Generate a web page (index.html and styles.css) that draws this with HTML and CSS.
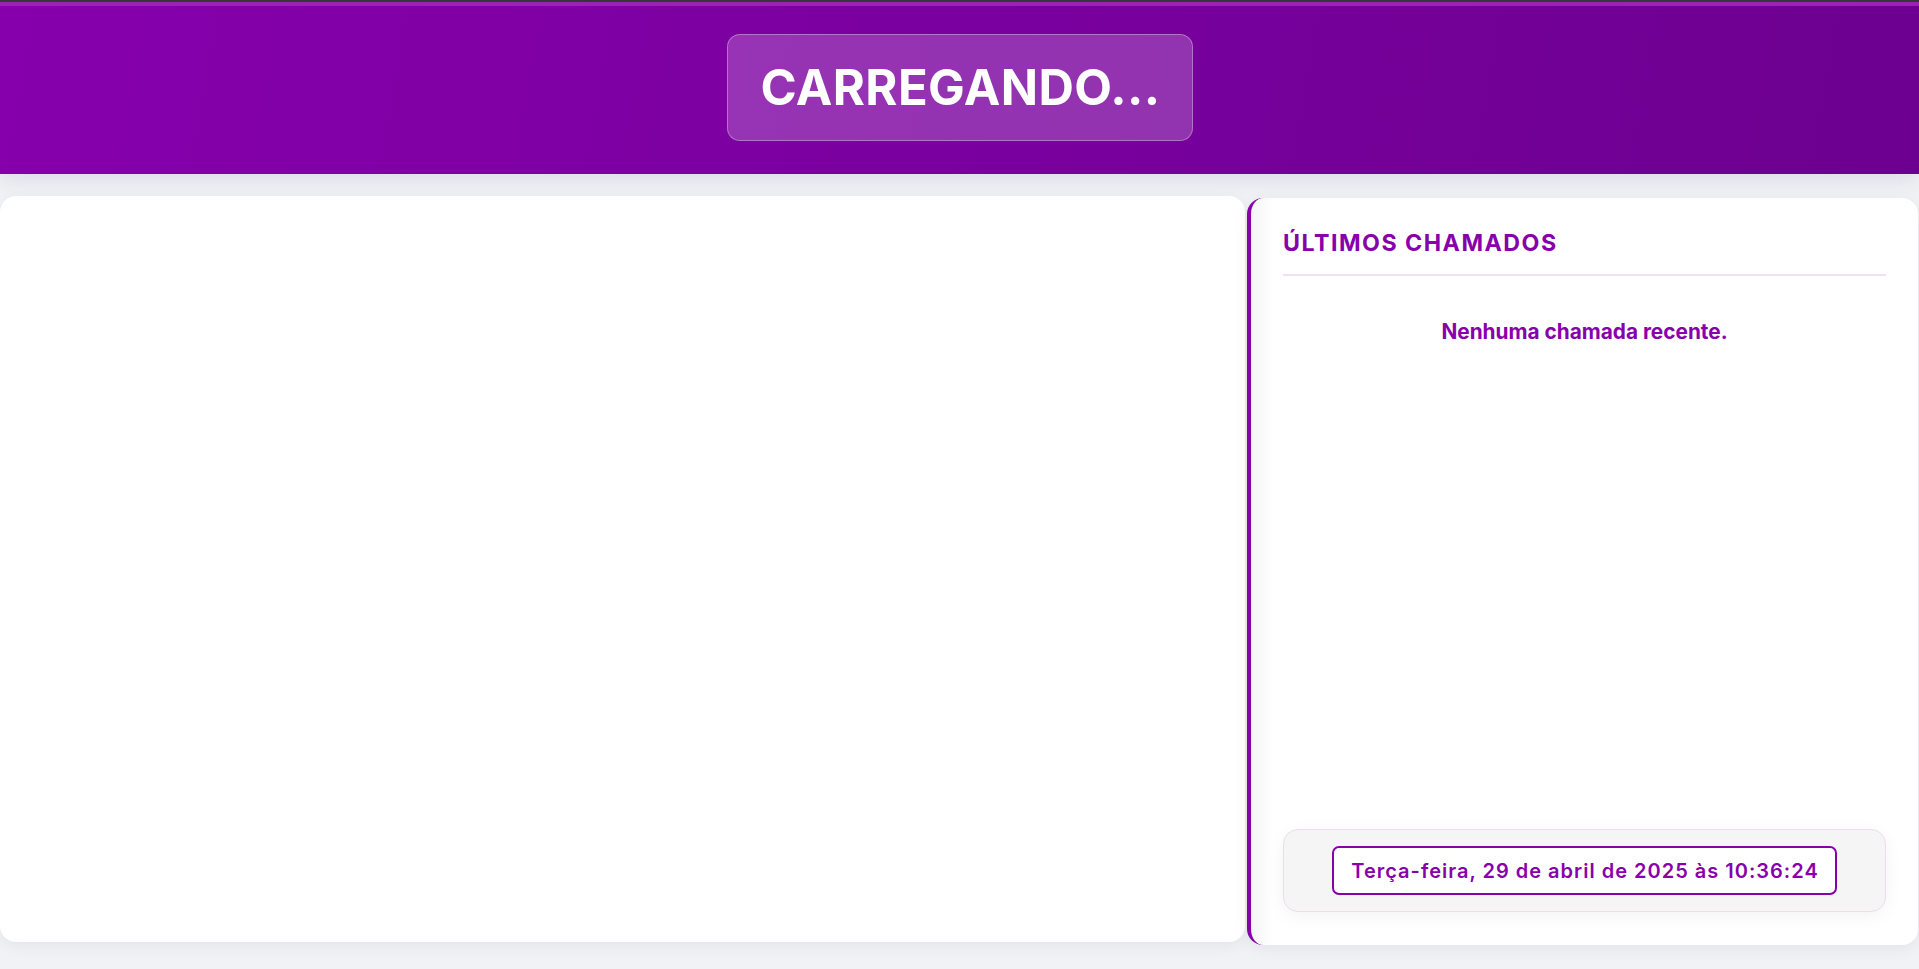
FILE: index.html
```html
<!DOCTYPE html>
<html lang="pt-BR">
<head>
<meta charset="utf-8">
<title>Painel de Chamadas</title>
<link rel="stylesheet" href="styles.css">
</head>
<body>
<div class="top-strip"></div>
<header class="header">
  <div class="title-box">CARREGANDO...</div>
</header>
<main class="main">
  <section class="panel panel-main"></section>
  <aside class="panel panel-side">
    <h2 class="side-title">ÚLTIMOS CHAMADOS</h2>
    <p class="empty">Nenhuma chamada recente.</p>
    <div class="footer-box">
      <div class="datetime">Terça-feira, 29 de abril de 2025 às 10:36:24</div>
    </div>
  </aside>
</main>
</body>
</html>
```

FILE: styles.css
```css
* { box-sizing: border-box; }

html, body {
  margin: 0;
  padding: 0;
  height: 100%;
}

body {
  font-family: Inter, "Noto Sans", sans-serif;
  background: #f1f2f5;
  overflow: hidden;
}

.top-strip {
  height: 2px;
  background: #383838;
}

.header {
  position: relative;
  z-index: 2;
  height: 172px;
  border-top: 4px solid #9a22b4;
  background: linear-gradient(100deg, #8600ac 0%, #7a009f 50%, #6c0090 100%);
  display: flex;
  justify-content: center;
  align-items: flex-start;
  padding-top: 28px;
  box-shadow: 0 4px 22px rgba(50, 60, 130, 0.13);
}

.title-box {
  width: 466px;
  height: 107px;
  display: flex;
  align-items: center;
  justify-content: center;
  padding-left: 2px;
  background: rgba(255, 255, 255, 0.2);
  border: 1px solid rgba(255, 255, 255, 0.32);
  border-radius: 13px;
  color: #fff;
  font-weight: 700;
  font-size: 49px;
  letter-spacing: 0.4px;
}

.main {
  display: grid;
  grid-template-columns: minmax(0, 1fr) 671px;
  column-gap: 2px;
  padding: 22px 1px 0 0;
}

.panel {
  background: #fff;
  border-radius: 16px;
}

.panel-main {
  height: 746px;
  box-shadow: 0 4px 16px rgba(0, 0, 0, 0.06);
}

.panel-side {
  position: relative;
  margin-top: 2px;
  height: 747px;
  border-left: 4px solid #8800aa;
  background: linear-gradient(90deg, #f4f4f6 0px, #ffffff 22px);
  box-shadow: 0 4px 16px rgba(0, 0, 0, 0.06);
  padding: 32px 32px 33px 32px;
  display: flex;
  flex-direction: column;
}

.side-title {
  margin: 0;
  font-size: 23.2px;
  line-height: 27px;
  font-weight: 700;
  letter-spacing: 1.5px;
  color: #8800aa;
  padding-bottom: 17px;
  border-bottom: 2px solid #f1e0f4;
}

.empty {
  margin: 43px 0 0;
  text-align: center;
  font-size: 20.8px;
  font-weight: 700;
  color: #8800aa;
}

.footer-box {
  margin-top: auto;
  height: 83px;
  background: #f5f5f6;
  border: 1px solid #ecdcf0;
  border-radius: 15px;
  display: flex;
  align-items: center;
  justify-content: center;
  box-shadow: 0 4px 18px rgba(0, 0, 0, 0.05);
}

.datetime {
  height: 49px;
  display: flex;
  align-items: center;
  padding: 0 16px 0 17px;
  background: #fff;
  border: 2px solid #8800aa;
  border-radius: 7px;
  color: #8800aa;
  font-size: 20px;
  font-weight: 600;
  letter-spacing: 1px;
}
```
